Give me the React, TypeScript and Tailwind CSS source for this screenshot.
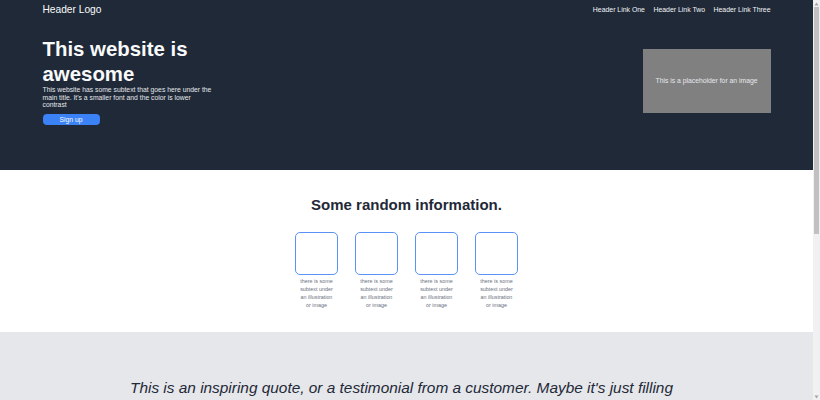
import React from "react";

const links = ["Header Link One", "Header Link Two", "Header Link Three"];

const Card: React.FC = () => (
  <div className="flex w-[43px] flex-col items-center">
    <div className="h-[43px] w-[43px] rounded-[5px] border border-[#5b92f7]" />
    <p className="mt-[2px] w-[37px] text-center text-[5.4px] leading-[8px] text-[#6b7280]">
      there is some subtext under an illustration or image
    </p>
  </div>
);

// the reference shows a thin browser scrollbar on the right
const Scrollbar: React.FC = () => (
  <div aria-hidden className="flex w-[7px] shrink-0 flex-col bg-[#f1f1f1]">
    <div className="flex h-[7px] items-center justify-center">
      <svg width="5" height="4" viewBox="0 0 5 4">
        <polygon points="2.5,0.5 4.5,3.5 0.5,3.5" fill="#a3a3a3" />
      </svg>
    </div>
    <div className="px-[1px]">
      <div className="h-[227px] bg-[#c1c1c1]" />
    </div>
    <div className="flex-1" />
    <div className="flex h-[7px] items-center justify-center">
      <svg width="5" height="4" viewBox="0 0 5 4">
        <polygon points="0.5,0.5 4.5,0.5 2.5,3.5" fill="#a3a3a3" />
      </svg>
    </div>
  </div>
);

const App: React.FC = () => {
  return (
    <div className="flex h-screen font-['Liberation_Sans',Arial,sans-serif]">
      <main className="min-w-0 flex-1 overflow-y-auto [scrollbar-width:none]">
        <header className="bg-[#1f2937]">
          <div className="mx-auto w-[728px]">
            <nav className="flex h-[20px] items-center justify-between">
              <div className="text-[10.2px] text-[#f9fafb]">Header Logo</div>
              <ul className="flex gap-[8.5px] text-[6.9px] text-[#f3f4f6]">
                {links.map((l) => (
                  <li key={l}>
                    <a href="#">{l}</a>
                  </li>
                ))}
              </ul>
            </nav>

            <div className="flex items-center justify-between pt-[17px] pb-[45px]">
              <div className="w-[171px]">
                <h1 className="text-[20.4px] leading-[24.5px] font-bold text-[#f9fafb]">
                  This website is awesome
                </h1>
                <p className="text-[6.8px] leading-[7.6px] text-[#e5e7eb]">
                  This website has some subtext that goes here under the main
                  title. It's a smaller font and the color is lower contrast
                </p>
                <a
                  href="#"
                  className="mt-[5px] block w-[57px] rounded-[4px] bg-[#3b82f6] text-center text-[6.8px] leading-[11.6px] text-[#f9fafb]"
                >
                  Sign up
                </a>
              </div>
              <div className="flex h-[64px] w-[128px] items-center justify-center bg-[#808080] text-[6.8px] text-[#e5e7eb]">
                This is a placeholder for an image
              </div>
            </div>
          </div>
        </header>

        <section className="bg-white pt-[24px] pb-[23px]">
          <h2 className="text-center text-[15px] leading-[22.5px] font-bold text-[#1f2937]">
            Some random information.
          </h2>
          <div className="mt-[15px] flex justify-center gap-[17px]">
            <Card />
            <Card />
            <Card />
            <Card />
          </div>
        </section>

        <section className="bg-[#e5e7eb] pt-[42px] pb-[40px]">
          <div className="mx-auto w-[553px]">
            <p className="text-[15.4px] leading-[27px] italic text-[#1f2937]">
              This is an inspiring quote, or a testimonial from a customer.
              Maybe it's just filling out the space, or maybe people will
              actually read it. Who knows? All I know is that it looks cool.
            </p>
            <p className="mt-[6px] text-right text-[10px] font-bold text-[#1f2937]">
              -Thor, Benevolent God of Thunder
            </p>
          </div>
        </section>

        <section className="bg-white py-[26px]">
          <div className="mx-auto flex w-[500px] items-center justify-between rounded-[5px] bg-[#3b82f6] px-[50px] py-[20px] text-[#f9fafb]">
            <div>
              <div className="text-[12px] font-bold">Call to action! It's time!</div>
              <div className="text-[7px]">
                Sign up for our product by clicking that button right over there!
              </div>
            </div>
            <a
              href="#"
              className="rounded-[4px] border border-[#f9fafb] px-[12px] text-[7px] leading-[14px]"
            >
              Sign up
            </a>
          </div>
        </section>

        <footer className="bg-[#1f2937] py-[14px] text-center text-[7px] text-[#e5e7eb]">
          Copyright © The Odin Project 2021
        </footer>
      </main>
      <Scrollbar />
    </div>
  );
};

export default App;
